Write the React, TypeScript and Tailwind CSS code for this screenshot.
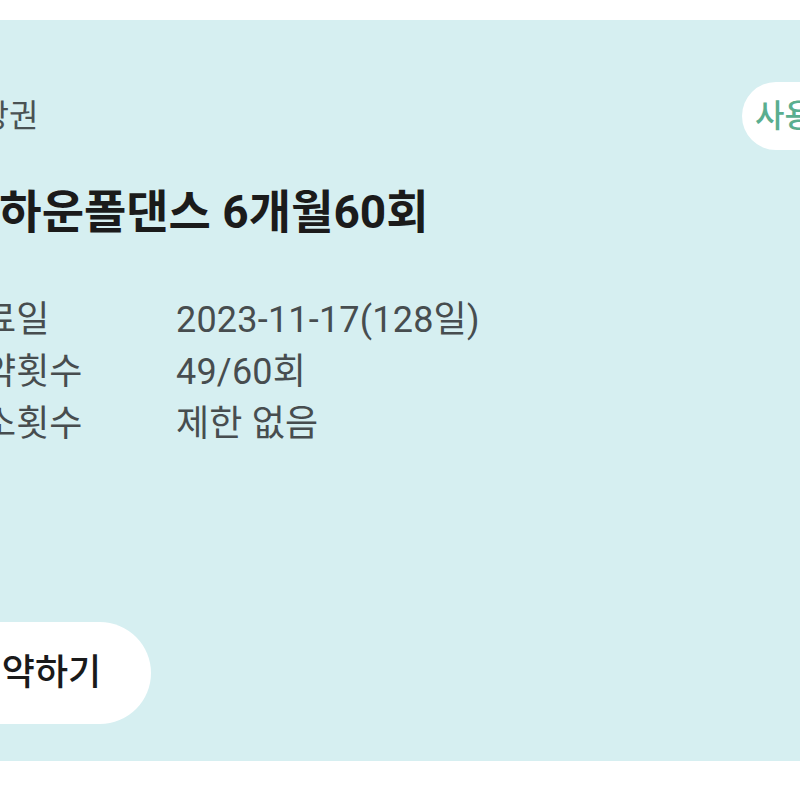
const ROWS = [
  { label: "종료일", value: "2023-11-17(128일)" },
  { label: "예약횟수", value: "49/60회" },
  { label: "취소횟수", value: "제한 없음" },
];

export default function App() {
  return (
    <div
      className="h-[800px] w-[800px] overflow-hidden bg-white pt-[20px]"
      style={{ fontFamily: 'Roboto, "Noto Sans CJK KR", sans-serif' }}
    >
      <div className="ml-[-80px] w-[980px] bg-[#d6eff1] pb-[37px] pl-[30px] pr-[40px] pt-[62px]">
        <div className="flex h-[68px] items-center justify-between">
          <div className="text-[32px] leading-none text-[#4a5254]">수강권</div>
          <div className="flex h-[68px] w-[118px] items-center rounded-full bg-white pl-[13px] text-[32px] font-medium text-[#5aae8f]">
            사용중
          </div>
        </div>

        <h1 className="mt-[34px] ml-[7px] text-[46px] font-bold leading-[56px] text-[#1b1b1b]">
          로하운폴댄스 6개월60회
        </h1>

        <div className="mt-[54px] flex flex-col">
          {ROWS.map((r) => (
            <div key={r.label} className="flex text-[36px] leading-[52px] text-[#474d4f]">
              <div className="w-[226px]">{r.label}</div>
              <div className="tracking-[0.2px]">{r.value}</div>
            </div>
          ))}
        </div>

        <button className="ml-[-41px] mt-[172px] flex h-[102px] w-[242px] items-center justify-center rounded-full bg-white pl-[10px] text-[36px] font-medium text-[#1a1a1a]">
          예약하기
        </button>
      </div>
    </div>
  );
}
